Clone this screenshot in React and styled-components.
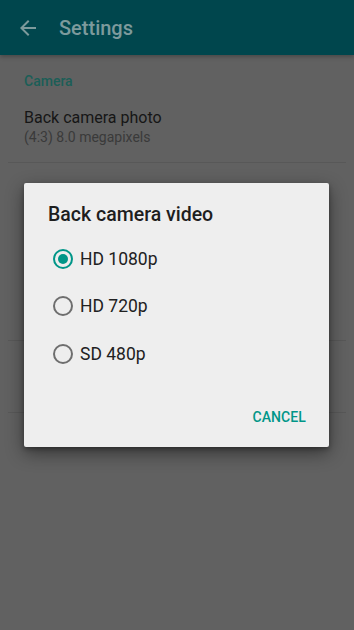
import React from 'react';
import styled, { createGlobalStyle } from 'styled-components';

const GlobalStyle = createGlobalStyle`
  html, body {
    margin: 0;
    padding: 0;
    background: #616161;
    font-family: Roboto, "Noto Sans", sans-serif;
  }
`;

const Page = styled.div`
  position: relative;
  width: 354px;
  height: 630px;
  overflow: hidden;
  background: #616161;
`;

const AppBar = styled.div`
  height: 55px;
  background: #00464d;
  display: flex;
  align-items: center;
  padding-left: 16px;
  box-shadow: 0 2px 4px rgba(0, 0, 0, 0.25);
`;

const Title = styled.div`
  margin-left: 19px;
  font-size: 20px;
  font-weight: 500;
  color: #7d9a9c;
`;

const Section = styled.div`
  padding: 18px 24px 0;
  font-size: 14px;
  font-weight: 500;
  color: #1b5e57;
`;

const Item = styled.div`
  padding: 19px 24px 16px 16px;
  border-bottom: 1px solid #585858;
  margin: 0 8px;
`;

const Primary = styled.div`
  font-size: 16px;
  color: #161616;
  line-height: 20px;
`;

const Secondary = styled.div`
  font-size: 14px;
  color: #3a3a3a;
  line-height: 18px;
`;

const Spacer = styled.div`
  height: ${(p) => p.h}px;
  margin: 0 8px;
  border-bottom: 1px solid #585858;
`;

const Overlay = styled.div`
  position: absolute;
  inset: 0;
  display: flex;
  justify-content: flex-start;
  align-items: flex-start;
  padding-top: 183px;
`;

const Dialog = styled.div`
  width: 305px;
  margin-left: 24px;
  background: #eeeeee;
  border-radius: 2px;
  box-shadow: 0 6px 18px rgba(0, 0, 0, 0.45), 0 2px 4px rgba(0, 0, 0, 0.3);
  padding: 20px 0 8px;
  box-sizing: border-box;
  height: 264px;
  display: flex;
  flex-direction: column;
`;

const DialogTitle = styled.div`
  padding: 0 24px;
  font-size: 19.5px;
  font-weight: 500;
  color: #1e1e1e;
  line-height: 24px;
`;

const Options = styled.div`
  margin-top: 8px;
  display: flex;
  flex-direction: column;
`;

const Option = styled.div`
  height: 47.5px;
  display: flex;
  align-items: center;
  padding-left: 29px;
`;

const Radio = styled.span`
  width: 20px;
  height: 20px;
  box-sizing: border-box;
  border-radius: 50%;
  border: 2px solid ${(p) => (p.checked ? '#009688' : '#6e6e6e')};
  display: flex;
  align-items: center;
  justify-content: center;
  &::after {
    content: '';
    width: 10px;
    height: 10px;
    border-radius: 50%;
    background: #009688;
    display: ${(p) => (p.checked ? 'block' : 'none')};
  }
`;

const Label = styled.span`
  margin-left: 7px;
  font-size: 17.5px;
  color: #212121;
`;

const Actions = styled.div`
  margin-top: auto;
  display: flex;
  justify-content: flex-end;
  padding: 0 23px 14px;
`;

const Button = styled.span`
  font-size: 14px;
  font-weight: 500;
  color: #009688;
  letter-spacing: 0.1px;
`;

const BackArrow = () => (
  <svg width="24" height="24" viewBox="0 0 24 24">
    <path
      d="M20 11H7.83l5.59-5.59L12 4l-8 8 8 8 1.41-1.41L7.83 13H20v-2z"
      fill="#7d9a9c"
    />
  </svg>
);

const options = ['HD 1080p', 'HD 720p', 'SD 480p'];

export default function App() {
  return (
    <Page>
      <GlobalStyle />
      <AppBar>
        <BackArrow />
        <Title>Settings</Title>
      </AppBar>
      <Section>Camera</Section>
      <Item>
        <Primary>Back camera photo</Primary>
        <Secondary>(4:3) 8.0 megapixels</Secondary>
      </Item>
      <Spacer h={177} />
      <Spacer h={71} />
      <Overlay>
        <Dialog>
          <DialogTitle>Back camera video</DialogTitle>
          <Options>
            {options.map((o, i) => (
              <Option key={o}>
                <Radio checked={i === 0} />
                <Label>{o}</Label>
              </Option>
            ))}
          </Options>
          <Actions>
            <Button>CANCEL</Button>
          </Actions>
        </Dialog>
      </Overlay>
    </Page>
  );
}
